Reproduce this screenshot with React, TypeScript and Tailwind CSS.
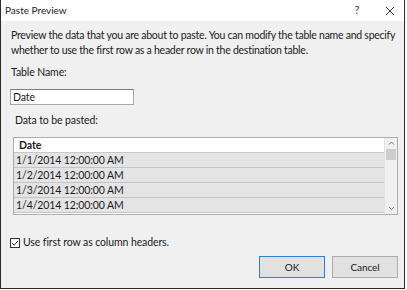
import { type FC } from "react";

const rows = [
  "1/1/2014 12:00:00 AM",
  "1/2/2014 12:00:00 AM",
  "1/3/2014 12:00:00 AM",
  "1/4/2014 12:00:00 AM",
];

const App: FC = () => {
  return (
    <div className="w-[407px] h-[290px] bg-white overflow-hidden" style={{ fontFamily: 'Lato, "Noto Sans", sans-serif' }}>
      <div className="w-[405px] h-[289px] flex flex-col border border-[#2b2b2b] border-t-0">
        <div className="h-[21px] bg-white flex items-center pl-[4px] pr-[8px] text-[10px] text-[#222]">
          <span className="flex-1">Paste Preview</span>
          <span className="w-[12px] text-center text-[11px] text-[#444] mr-[22px]">?</span>
          <svg width="10" height="10" viewBox="0 0 10 10" className="mr-[1px]">
            <path d="M1 1 L9 9 M9 1 L1 9" stroke="#333" strokeWidth="1" />
          </svg>
        </div>
        <div className="flex-1 bg-[#f0f0f0] px-[9px] pt-[7px] text-[10.5px] text-[#1a1a1a] leading-[15px] tracking-[-0.1px]">
          <p className="pl-[1px] w-[390px] tracking-[-0.25px]">
            Preview the data that you are about to paste. You can modify the table name and specify whether to use the first row as a header row in the destination table.
          </p>
          <p className="mt-[7px] pl-[1px]">Table Name:</p>
          <div className="mt-[9px] w-[124px] h-[16px] bg-white border border-[#a8a8a8] border-t-[#7a7a7a] pl-[2px] leading-[14px]">Date</div>
          <p className="mt-[8px] pl-[5px]">Data to be pasted:</p>
          <div className="mt-[9px] ml-[3px] w-[385px] h-[78px] border border-[#adadad] bg-white flex">
            <div className="flex-1 flex flex-col">
              <div className="h-[15px] bg-white border-b border-[#c8c8c8] pl-[5px] font-bold leading-[14px]">Date</div>
              {rows.map((r) => (
                <div key={r} className="h-[15px] bg-[#e4e4e4] border-b border-[#c4c4c4] pl-[2px] leading-[14px]">{r}</div>
              ))}
            </div>
            <div className="w-[13px] bg-[#f0f0f0] border-l border-[#e2e2e2] flex flex-col items-center">
              <svg width="7" height="11" viewBox="0 0 7 11">
                <path d="M1 6.5 L3.5 4 L6 6.5" stroke="#777" fill="none" strokeWidth="1" />
              </svg>
              <div className="w-[10px] h-[11px] bg-[#cdcdcd]" />
              <div className="flex-1" />
              <svg width="7" height="11" viewBox="0 0 7 11">
                <path d="M1 4 L3.5 6.5 L6 4" stroke="#777" fill="none" strokeWidth="1" />
              </svg>
            </div>
          </div>
          <div className="mt-[20px] flex items-center gap-[3px]">
            <svg width="10" height="10" viewBox="0 0 10 10">
              <rect x="0.5" y="0.5" width="9" height="9" fill="white" stroke="#333" />
              <path d="M2 5 L4.2 7.2 L8 2.8" stroke="#333" fill="none" strokeWidth="1" />
            </svg>
            <span>Use first row as column headers.</span>
          </div>
          <div className="mt-[6px] flex justify-end gap-[7px] mr-[-3px]">
            <button className="w-[66px] h-[22px] bg-[#e1e1e1] border border-[#2f80d0] text-[10px] leading-[20px]">OK</button>
            <button className="w-[66px] h-[22px] bg-[#e1e1e1] border border-[#adadad] text-[10px] leading-[20px]">Cancel</button>
          </div>
        </div>
      </div>
    </div>
  );
};

export default App;
